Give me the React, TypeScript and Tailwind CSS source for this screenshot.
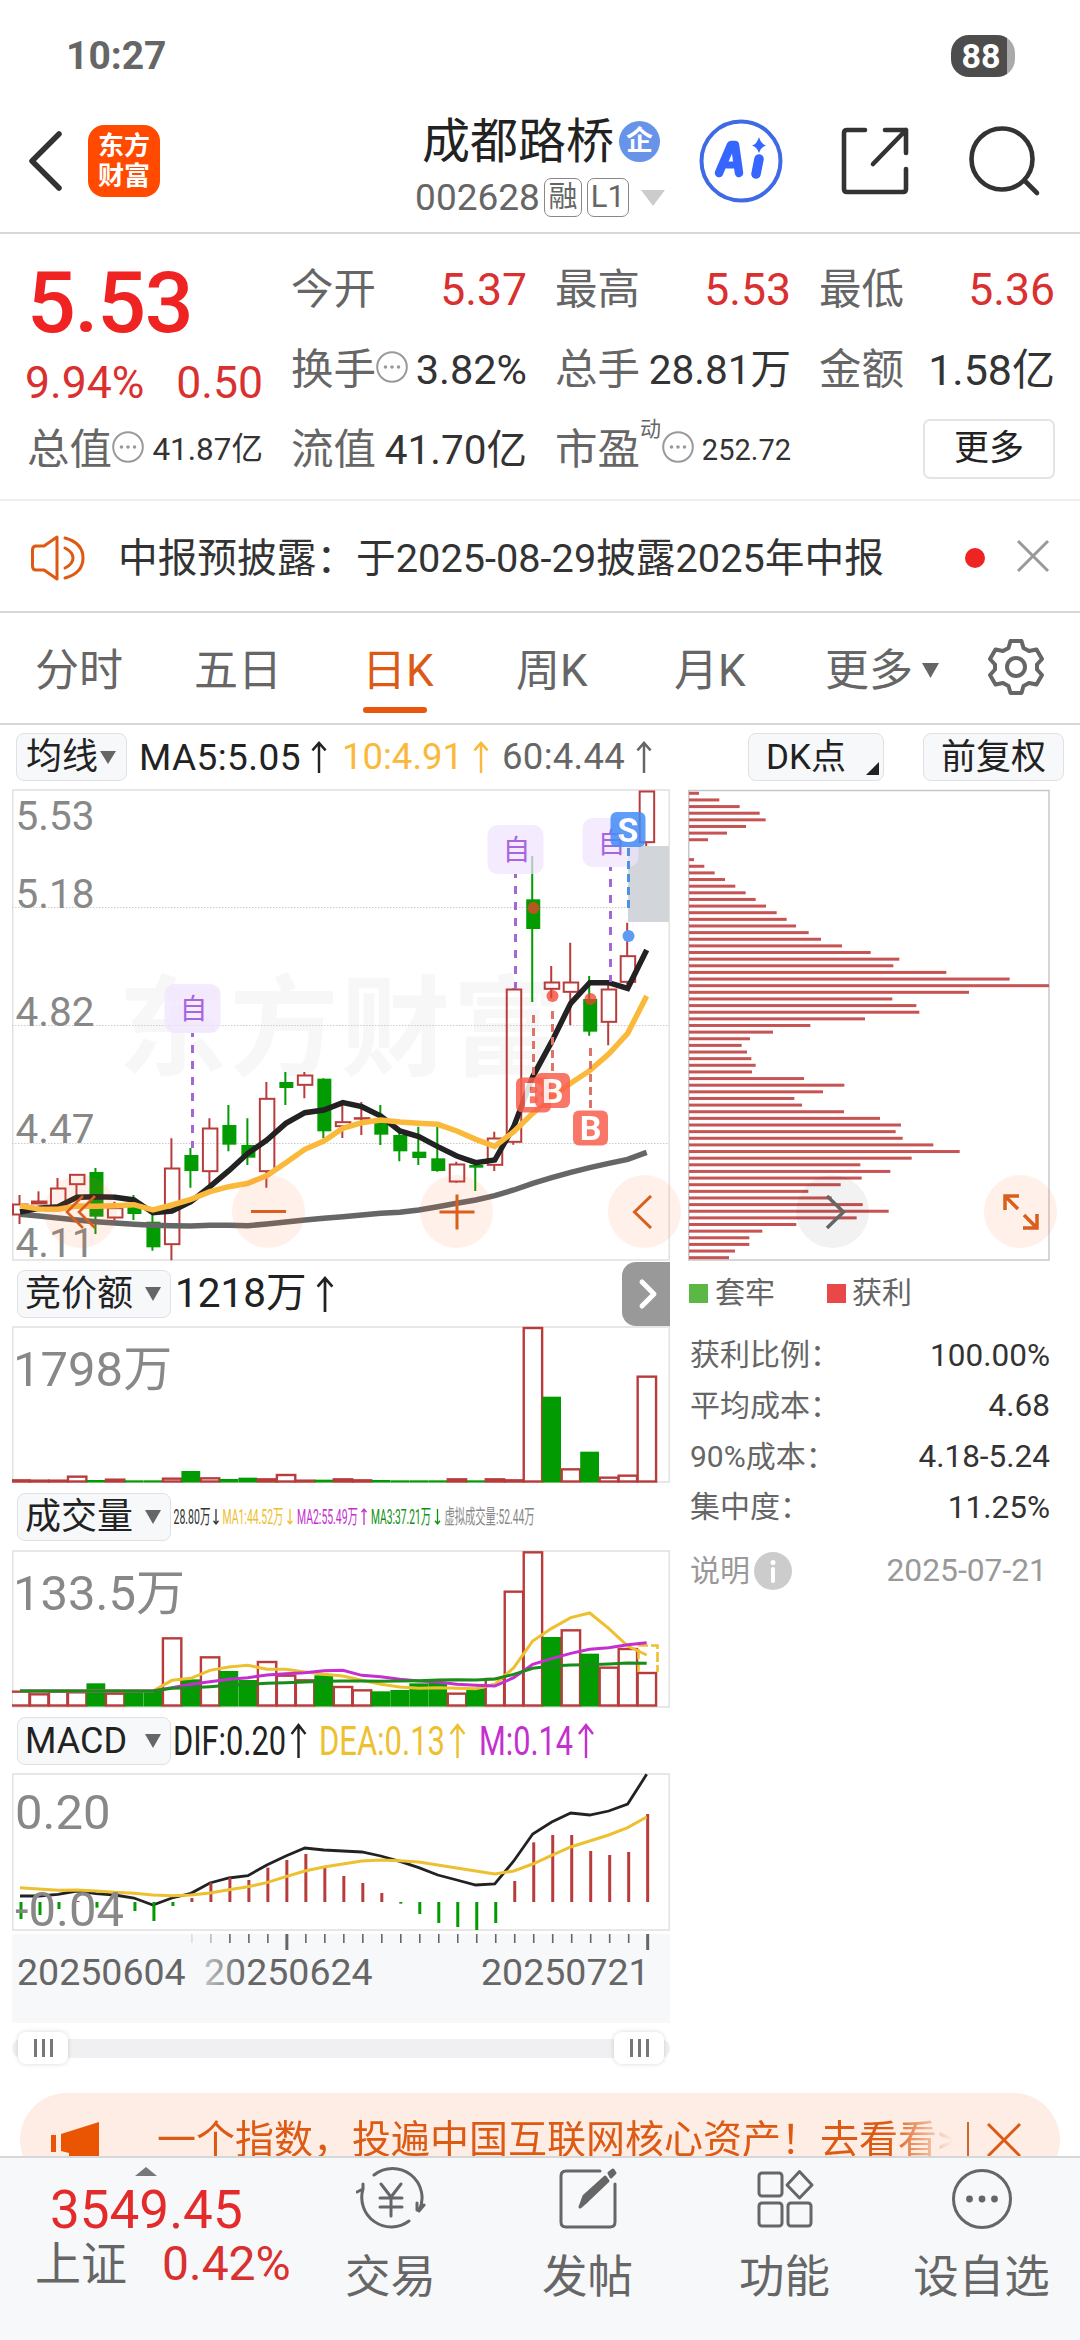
import React from 'react';

// x position of the centre of a trading day in every chart of the left column
const dayX = (i: number) => 20 + i * 18.99;

const RED = '#b93c3c';
const GREEN = '#029c02';

// [up, high, low, body top, body bottom], thirds of a pixel below the origin at 780
const candles: [number, number, number, number, number][] = [
  [1, 1245, 1332, 1272, 1305],
  [1, 1234, 1272, 1263, 1272],
  [1, 1194, 1280, 1224, 1280],
  [1, 1183, 1245, 1183, 1214],
  [0, 1164, 1362, 1176, 1310],
  [1, 1265, 1322, 1283, 1314],
  [0, 1245, 1320, 1275, 1302],
  [0, 1300, 1412, 1325, 1402],
  [1, 1075, 1441, 1164, 1394],
  [0, 1104, 1223, 1125, 1173],
  [1, 1015, 1215, 1044, 1175],
  [0, 975, 1114, 1035, 1094],
  [0, 1015, 1155, 1095, 1133],
  [1, 906, 1223, 955, 1175],
  [0, 876, 975, 906, 924],
  [1, 876, 955, 885, 916],
  [0, 895, 1075, 896, 1054],
  [1, 972, 1074, 1025, 1040],
  [1, 966, 1065, 1013, 1016],
  [0, 975, 1095, 1025, 1064],
  [0, 1055, 1144, 1065, 1114],
  [0, 1040, 1155, 1115, 1134],
  [0, 1027, 1175, 1135, 1173],
  [1, 1145, 1208, 1152, 1206],
  [0, 1150, 1233, 1155, 1163],
  [1, 1055, 1173, 1074, 1156],
  [1, 625, 1094, 627, 1087],
  [0, 228, 666, 358, 447],
  [1, 558, 655, 606, 628],
  [1, 488, 736, 606, 637],
  [0, 588, 767, 657, 755],
  [1, 615, 796, 627, 727],
  [1, 428, 612, 527, 607],
  [1, 33, 198, 33, 188],
];

const ma5 = [1296, 1285, 1280, 1252, 1250, 1252, 1260, 1298, 1293, 1265, 1220, 1172, 1120, 1080, 1030, 998, 990, 968, 980, 1008, 1053, 1070, 1100, 1128, 1148, 1140, 1040, 890, 785, 670, 608, 608, 625, 510];
const ma10 = [1277, 1287, 1288, 1278, 1279, 1277, 1274, 1290, 1275, 1258, 1235, 1220, 1210, 1187, 1148, 1108, 1083, 1045, 1028, 1020, 1026, 1030, 1033, 1053, 1078, 1099, 1055, 1000, 950, 910, 872, 822, 760, 648];
const ma60 = [1303, 1308, 1314, 1320, 1325, 1329, 1333, 1336, 1337, 1338, 1336, 1336, 1337, 1332, 1326, 1320, 1315, 1310, 1305, 1300, 1297, 1290, 1280, 1270, 1260, 1247, 1230, 1210, 1193, 1177, 1163, 1150, 1138, 1117];

const auction: [number, number][] = [
  [1, 661], [1, 662], [1, 662], [1, 650], [0, 660], [1, 659], [0, 661], [0, 661], [1, 656], [0, 633], [1, 655], [0, 657],
  [0, 653], [1, 658], [1, 645], [1, 662], [0, 659], [1, 658], [1, 661], [0, 660], [0, 661], [0, 661], [0, 661], [1, 658],
  [0, 661], [1, 658], [1, 661], [1, 204], [0, 410], [1, 628], [0, 575], [1, 653], [1, 647], [1, 350],
];

const volume: [number, number][] = [
  [1, 602], [1, 610], [1, 602], [1, 604], [0, 577], [1, 608], [0, 600], [0, 600], [1, 442], [0, 565], [1, 499], [0, 540],
  [0, 567], [1, 513], [1, 554], [1, 568], [0, 553], [1, 588], [1, 598], [0, 601], [0, 597], [0, 577], [0, 573], [1, 608],
  [0, 592], [1, 564], [1, 302], [1, 184], [0, 438], [1, 418], [0, 488], [1, 530], [1, 474], [1, 546],
];
const volMa1 = [600, 600, 600, 600, 600, 600, 600, 600, 568, 562, 538, 528, 523, 535, 535, 543, 550, 555, 568, 580, 588, 592, 590, 592, 593, 580, 530, 450, 412, 380, 366, 412, 465, 492];
const volMa2 = [600, 600, 600, 600, 600, 600, 600, 600, 590, 580, 572, 565, 560, 552, 548, 545, 539, 538, 553, 557, 565, 570, 573, 580, 583, 585, 560, 520, 503, 487, 475, 470, 461, 455];
const volMa3 = [600, 600, 600, 600, 600, 600, 600, 600, 592, 590, 587, 583, 580, 577, 575, 573, 571, 570, 570, 571, 570, 569, 567, 566, 567, 564, 550, 532, 525, 522, 521, 519, 516, 517];

const macd = [564, 552, 534, 510, 530, 533, 540, 570, 525, 501, 455, 440, 447, 410, 387, 369, 411, 435, 456, 486, 518, 549, 576, 588, 597, 576, 450, 334, 312, 312, 360, 372, 363, 249];
const dif = [495, 495, 490, 480, 488, 492, 501, 522, 501, 487, 456, 441, 434, 402, 375, 351, 357, 360, 363, 375, 391, 410, 432, 447, 462, 459, 390, 309, 273, 246, 252, 240, 219, 130];
const dea = [470, 474, 478, 477, 480, 484, 487, 492, 494, 492, 486, 476, 467, 455, 437, 420, 408, 399, 390, 387, 389, 393, 402, 411, 420, 429, 420, 399, 373, 348, 330, 312, 290, 258];

const chips = [
  87, 148, 209, 269, 287, 228, 171, 114, 0, 0, 72, 103, 134, 165, 196, 227, 257, 288, 320, 350, 378, 416, 453, 516, 602,
  688, 670, 829, 1019, 1137, 897, 667, 739, 748, 585, 421, 309, 240, 215, 231, 244, 257, 246, 402, 523, 459, 373, 396,
  522, 630, 693, 677, 698, 790, 869, 725, 571, 661, 575, 512, 415, 485, 578, 656, 560, 379, 277, 238, 238, 195, 177,
];

const costs = [
  ['获利比例：', '100.00%'],
  ['平均成本：', '4.68'],
  ['90%成本：', '4.18-5.24'],
  ['集中度：', '11.25%'],
];

type LineProps = { data: number[]; top: number; color: string; width: number };

const Line = ({ data, top, color, width }: LineProps) => (
  <polyline
    points={data.map((v, i) => `${dayX(i)},${top + v / 3}`).join(' ')}
    fill="none"
    stroke={color}
    strokeWidth={width}
  />
);

const Bars = ({ data, top, base }: { data: [number, number][]; top: number; base: number }) => (
  <>
    {data.map(([up, v], i) => {
      const y = top + v / 3;
      return up ? (
        <rect key={i} x={dayX(i) - 9} y={y} width={18.4} height={base - y} fill="#fff" stroke={RED} strokeWidth={2.4} />
      ) : (
        <rect key={i} x={dayX(i) - 9.5} y={y} width={18.8} height={base + 1 - y} fill={GREEN} />
      );
    })}
  </>
);

const Arrow = ({ className = '', down = false }) => (
  <svg viewBox="0 0 18 36" className={`shrink-0 ${className}`} fill="none" stroke="currentColor" strokeWidth={2.6}>
    <path d={down ? 'M9 1V34M2 26L9 34L16 26' : 'M9 35V3M2 11L9 3L16 11'} />
  </svg>
);

const Caret = ({ className = '' }) => (
  <svg viewBox="0 0 16 14" preserveAspectRatio="none" className={`shrink-0 ${className}`} fill="currentColor">
    <path d="M0 0H16L8 14Z" />
  </svg>
);

const Tip = () => (
  <svg viewBox="0 0 32 32" className="w-8 h-8 shrink-0" fill="#999">
    <circle cx="16" cy="16" r="14.8" fill="none" stroke="#999" strokeWidth="2" />
    <circle cx="9.5" cy="16" r="1.8" />
    <circle cx="16" cy="16" r="1.8" />
    <circle cx="22.5" cy="16" r="1.8" />
  </svg>
);

const Stat = ({ label, value, valueClass, tip = false }: { label: string; value: string; valueClass: string; tip?: boolean }) => (
  <div className="flex items-center justify-between h-20">
    <div className="flex items-center text-[42.5px] text-[#666]">
      {label}
      {tip && <div className="-mt-1.5"><Tip /></div>}
    </div>
    <div className={valueClass}>{value}</div>
  </div>
);

const StatusBar = () => (
  <div className="flex items-center justify-between h-[112px] pl-[66px] pr-[65px]">
    <div className="text-[39px] font-bold text-[#666]">10:27</div>
    <div className="flex items-center justify-center w-[64px] h-[42px] rounded-[18px] pr-1 text-[34px] font-bold text-white bg-[linear-gradient(90deg,#4d4d4d_87%,#aaa_87%)]">
      88
    </div>
  </div>
);

const Header = () => (
  <div className="flex items-center h-[122px] pb-[22px] border-b-2 border-[#d8d8d8]">
    <svg viewBox="0 0 36 62" className="w-9 h-[62px] ml-[28px]" fill="none" stroke="#333" strokeWidth="5.5" strokeLinecap="round" strokeLinejoin="round">
      <path d="M31 4L4 31L31 58" />
    </svg>
    <div className="flex flex-col items-center justify-center w-[72px] h-[72px] ml-[24px] rounded-[16px] bg-[#ff4a00] text-white text-[26px] leading-[30px] font-bold">
      <span>东方</span>
      <span>财富</span>
    </div>
    <div className="flex flex-col items-center w-[260px] ml-[252px] mt-[13px]">
      <div className="flex items-center h-[52px] -ml-[2px] text-[48px] text-[#222]">
        成都路桥
        <div className="flex items-center justify-center w-[41px] h-[41px] ml-[5px] rounded-full bg-[#6793e8] text-white text-[27px] font-bold">企</div>
      </div>
      <div className="flex items-center h-[44px] mt-[8px] -ml-[4px] text-[37px] text-[#666]">
        002628
        <div className="flex items-center justify-center w-[38px] h-[39px] ml-[4px] rounded-[7px] border-[1.5px] border-[#888] text-[29px]">融</div>
        <div className="flex items-center justify-center w-[42px] h-[39px] ml-[5px] rounded-[7px] border-[1.5px] border-[#888] text-[31px]">L1</div>
        <Caret className="w-[24px] h-[16px] ml-[12px] text-[#ccc]" />
      </div>
    </div>
    <svg viewBox="0 0 84 84" className="w-[84px] h-[84px] ml-[27px]">
      <circle cx="42" cy="42" r="39.5" fill="#fff" stroke="#3f6ae6" strokeWidth="4" />
      <g fill="none" stroke="#3566ff" strokeLinecap="round" strokeLinejoin="round">
        <path d="M20 54L32 26H36L40 54" strokeWidth="8.5" />
        <path d="M28 46H38" strokeWidth="7" />
        <path d="M60 40L57 55" strokeWidth="9.5" />
      </g>
      <path d="M60 18Q62 25 67 26.5Q62 28 60 34Q58 28 53 26.5Q58 25 60 18Z" fill="#3566ff" />
    </svg>
    <svg viewBox="0 0 70 70" className="w-[70px] h-[70px] ml-[57px]" fill="none" stroke="#333" strokeWidth="4.6" strokeLinecap="round" strokeLinejoin="round">
      <path d="M25 4H7Q4 4 4 7V63Q4 66 7 66H63Q66 66 66 63V43M45 4H66V27M66 4L33 38" />
    </svg>
    <svg viewBox="0 0 74 74" className="w-[74px] h-[74px] ml-[58px]" fill="none" stroke="#333" strokeWidth="4.6" strokeLinecap="round">
      <circle cx="34" cy="35" r="30.5" />
      <path d="M57 57L69 69" />
    </svg>
  </div>
);

const Quote = () => (
  <div className="grid grid-cols-4 gap-x-7 h-[267px] pt-[16px] pl-[27px] pr-[25px] leading-none border-b-2 border-[#eee]">
    <div>
      <div className="flex items-center h-[106px] text-[86px] tracking-[-1.3px] font-medium text-[#f02323]">5.53</div>
      <div className="flex items-center justify-between h-[54px] -ml-[2px] text-[44.5px] text-[#d93030]">
        <span>9.94%</span>
        <span>0.50</span>
      </div>
      <Stat label="总值" value="41.87亿" valueClass="text-[31.5px] text-[#333]" tip />
    </div>
    <div>
      <Stat label="今开" value="5.37" valueClass="text-[44.5px] text-[#d93030]" />
      <Stat label="换手" value="3.82%" valueClass="text-[41.5px] text-[#333]" tip />
      <Stat label="流值" value="41.70亿" valueClass="text-[40.5px] text-[#333]" />
    </div>
    <div>
      <Stat label="最高" value="5.53" valueClass="text-[44.5px] text-[#d93030]" />
      <Stat label="总手" value="28.81万" valueClass="text-[40.5px] text-[#333]" />
      <div className="flex items-center h-20">
        <div className="text-[42.5px] text-[#666]">市盈</div>
        <div className="-mt-[42px] text-[21px] text-[#666]">动</div>
        <div className="-mt-1.5 ml-[1px]"><Tip /></div>
        <div className="ml-auto text-[29px] text-[#333]">252.72</div>
      </div>
    </div>
    <div>
      <Stat label="最低" value="5.36" valueClass="text-[44.5px] text-[#d93030]" />
      <Stat label="金额" value="1.58亿" valueClass="text-[43px] text-[#333]" />
      <div className="flex items-center justify-end h-20">
        <div className="flex items-center justify-center w-[132px] h-[60px] -mt-[3px] rounded-[7px] border-2 border-[#e4e4e8] text-[35px] text-[#222]">更多</div>
      </div>
    </div>
  </div>
);

const Notice = () => (
  <div className="flex items-center h-[112px] pl-[30px] pr-[30px] border-b-2 border-[#d8d8d8]">
    <svg viewBox="0 0 56 48" className="w-14 h-12 mt-1" fill="none" stroke="#dd5a14" strokeWidth="3" strokeLinejoin="round" strokeLinecap="round">
      <path d="M27 3V45L14 36H6Q2.500 36 2.500 32V16Q2.500 12 6 12H14Z" />
      <path d="M35 14Q43 18 43 24Q43 30 35 34M35 4Q53 9 53 24Q53 39 35 44" />
    </svg>
    <div className="mt-[5px] ml-[32px] text-[39.7px] text-[#333] whitespace-nowrap">中报预披露：于2025-08-29披露2025年中报</div>
    <div className="w-5 h-5 mt-1 ml-auto rounded-full bg-[#f02323]" />
    <svg viewBox="0 0 34 34" className="w-[34px] h-[34px] ml-[31px]" stroke="#999" strokeWidth="3">
      <path d="M2 2L32 32M32 2L2 32" />
    </svg>
  </div>
);

const Tabs = () => (
  <div className="flex items-center h-[112px] pl-[35px] pr-[35px] pt-[5px] text-[44px] text-[#666] border-b-2 border-[#d8d8d8]">
    <div className="w-[159px]">分时</div>
    <div className="w-[168px]">五日</div>
    <div className="relative w-[154px] text-[#dd5a14]">
      日K
      <div className="absolute left-[1px] -bottom-[9px] w-[64px] h-[6px] rounded-full bg-[#e8570c]" />
    </div>
    <div className="w-[158px]">周K</div>
    <div className="w-[151px]">月K</div>
    <div className="flex items-center">
      更多
      <Caret className="w-[17px] h-[15px] ml-[9px]" />
    </div>
    <svg viewBox="0 0 58 58" className="w-[58px] h-[58px] ml-auto -mt-[7px]" fill="none" stroke="#666" strokeWidth="4" strokeLinejoin="round">
      <path d="M23.500 3H34.500L36.500 10L42 13L49.500 11.500L55 21L50 26.500V31.500L55 37L49.500 46.500L42 45L36.500 48L34.500 55H23.500L21.500 48L16 45L8.500 46.500L3 37L8 31.500V26.500L3 21L8.500 11.500L16 13L21.500 10Z" />
      <circle cx="29" cy="29" r="9" />
    </svg>
  </div>
);

const pill = 'flex items-center h-[48px] rounded-[8px] border-[1.5px] border-[#dfe1e6] bg-[#f7f8fa] text-[#222]';

const MaRow = () => (
  <div className="flex items-center h-[64px] pl-[16px] pr-[16px] leading-none text-[36.5px]">
    <div className={`${pill} w-[111px] pl-[9px] text-[36px]`}>
      均线
      <Caret className="w-[16px] h-[13px] ml-[2px] text-[#666]" />
    </div>
    <div className="w-[161px] ml-[12px] text-[37px] tracking-[0.4px] text-[#222] whitespace-nowrap">MA5:5.05</div>
    <Arrow className="w-[18px] h-[34px] ml-[10px] text-[#222]" />
    <div className="w-[120px] ml-[14px] text-[#fbb93c]">10:4.91</div>
    <Arrow className="w-[18px] h-[34px] ml-[10px] text-[#fbb93c]" />
    <div className="w-[125px] ml-[12px] tracking-[0.3px] text-[#666]">60:4.44</div>
    <Arrow className="w-[18px] h-[34px] ml-[8px] text-[#666]" />
    <div className={`${pill} relative w-[136px] ml-auto pl-[17px] text-[35px]`}>
      DK点
      <svg viewBox="0 0 13 13" className="absolute right-[4px] bottom-[5px] w-[13px] h-[13px]"><path d="M13 0V13H0Z" fill="#222" /></svg>
    </div>
    <div className={`${pill} w-[141px] ml-[39px] justify-center text-[35px]`}>前复权</div>
  </div>
);

const Own = ({ x, y, end }: { x: number; y: number; end: number }) => (
  <g>
    <rect x={x - 28} y={y} width="56" height="49" rx="10" fill="#f0e2ff" fillOpacity="0.7" />
    <path d={`M${x} ${y + 49}V${end}`} stroke="#a269d6" strokeWidth="3" strokeDasharray="8 8" strokeDashoffset="4" />
    <text x={x + 1} y={y + 35} textAnchor="middle" fontSize="28" fill="#a765e0">自</text>
  </g>
);

const Mark = ({ x, y, label, color }: { x: number; y: number; label: string; color: string }) => (
  <g opacity="0.85">
    <rect x={x - 17.5} y={y} width="35" height="35" rx="6" fill={color} />
    <text x={x} y={y + 29.5} textAnchor="middle" fontSize="34" fontWeight="700" fill="#fff">{label}</text>
  </g>
);

const PriceChart = () => (
  <svg viewBox="12 789 658 472" className="block w-[658px] h-[472px]">
    <text x="118" y="1067" fontSize="109" fontWeight="700" letterSpacing="2.500" fill="#f7f7f7">东方财富</text>
    <rect x="12.750" y="790" width="656.500" height="470" fill="none" stroke="#e2e2e2" strokeWidth="1.600" />
    <path d="M12 907.500H669M12 1025.500H669M12 1143.500H669" stroke="#ccc" strokeWidth="1.200" strokeDasharray="1.500 1.500" />
    <rect x="628" y="846" width="41" height="76" fill="#d2d6db" />
    <g fontSize="40.500" fill="#888">
      <text x="15.500" y="830">5.53</text>
      <text x="15.500" y="908">5.18</text>
      <text x="15.500" y="1026">4.82</text>
      <text x="15.500" y="1143">4.47</text>
    </g>
    {candles.map(([up, high, low, top, bottom], i) => {
      const x = dayX(i) - 0.5;
      const t = 780 + top / 3;
      const b = 780 + bottom / 3;
      return (
        <g key={i}>
          <path d={`M${x} ${780 + high / 3}V${up ? t : b}M${x} ${up ? b : t}V${780 + low / 3}`} stroke={up ? RED : GREEN} strokeWidth="2" />
          {up ? (
            <rect x={x - 6.5} y={t + 0.5} width="14.500" height={Math.max(b - t - 1, 0.5)} fill="none" stroke={RED} strokeWidth="2" />
          ) : (
            <rect x={x - 6} y={t} width="14" height={b - t} fill={GREEN} />
          )}
        </g>
      );
    })}
    <Line data={ma60} top={780} color="#666" width={5.5} />
    <Line data={ma5} top={780} color="#222" width={5.5} />
    <Line data={ma10} top={780} color="#fbb93c" width={5.5} />
    <text x="15.500" y="1257" fontSize="40.500" fill="#888">4.11</text>
    <Own x={192.5} y={984} end={1148} />
    <Own x={515.5} y={825} end={989} />
    <Own x={610.5} y={818} end={982} />
    <g strokeWidth="3" strokeDasharray="8 5" fill="none">
      <path d="M533.500 1015V1078M552.500 1011V1074M590.500 1048V1110" stroke="#dd7468" />
      <path d="M628.500 848V909" stroke="#5092dd" />
    </g>
    <g fill="#f0402c" fillOpacity="0.75">
      <circle cx="533.500" cy="908" r="6" />
      <circle cx="552.500" cy="996" r="6" />
      <circle cx="590.500" cy="999" r="6" />
    </g>
    <circle cx="628.500" cy="936" r="6" fill="#5c9cf5" />
    <Mark x={533.5} y={1077.5} label="B" color="#f9604e" />
    <Mark x={552.5} y={1073} label="B" color="#f9604e" />
    <Mark x={590.5} y={1110.5} label="B" color="#f9604e" />
    <Mark x={628} y={812} label="S" color="#438cf7" />
  </svg>
);

const ChipChart = () => (
  <svg viewBox="687 789 364 472" className="block w-[364px] h-[472px]">
    <rect x="688.750" y="790.500" width="360.250" height="469.500" fill="none" stroke="#c8c8c8" strokeWidth="1.500" />
    {chips.map((v, i) => v > 0 && <rect key={i} x="689" y={791.8 + i * 6.634} width={(v - 57) / 3} height="3" fill="#c75454" />)}
  </svg>
);

const round = 'absolute top-[386px] flex items-center justify-center w-[73px] h-[73px] rounded-full';

const ChartButtons = () => (
  <div className="text-[#d95f1c]">
    <div className={`${round} left-[44px] bg-[#ff6e28]/10`}>
      <svg viewBox="0 0 34 34" className="w-[34px] h-[34px]" fill="none" stroke="currentColor" strokeWidth="2.600"><path d="M19 1L3 17L19 33M31 1L15 17L31 33" /></svg>
    </div>
    <div className={`${round} left-[232px] bg-[#ff6e28]/10`}>
      <div className="w-[35px] h-[3px] bg-[#d95f1c]" />
    </div>
    <div className={`${round} left-[420px] bg-[#ff6e28]/10`}>
      <svg viewBox="0 0 36 36" className="w-9 h-9" stroke="currentColor" strokeWidth="3"><path d="M18 0.500V35.500M0.500 18H35.500" /></svg>
    </div>
    <div className={`${round} left-[608px] bg-[#ff6e28]/10`}>
      <svg viewBox="0 0 34 34" className="w-[34px] h-[34px] -ml-1" fill="none" stroke="currentColor" strokeWidth="3"><path d="M25 1L8.500 17L25 33" /></svg>
    </div>
    <div className={`${round} left-[796px] bg-black/5 text-[#666]`}>
      <svg viewBox="0 0 34 34" className="w-[34px] h-[34px]" fill="none" stroke="currentColor" strokeWidth="3.500"><path d="M11 1L27.500 17L11 33" /></svg>
    </div>
    <div className={`${round} left-[984px] bg-[#ff6e28]/10`}>
      <svg viewBox="0 0 36 36" className="w-9 h-9" fill="none" stroke="currentColor" strokeWidth="3.500"><path d="M2 16V2H16M2 2L15 15M34 20V34H20M34 34L21 21" /></svg>
    </div>
  </div>
);

const Indicator = ({ name }: { name: string }) => (
  <div className={`${pill} w-[154px] pl-[7px] pr-[9px] justify-between text-[36px]`}>
    {name}
    <Caret className="w-[16px] h-[14px] text-[#666]" />
  </div>
);

// indicator values squeezed to the width that is left beside the selector
const Fit = ({ x, w, y, size, color, children }: { x: number; w: number; y: number; size: number; color: string; children: string }) => (
  <text x={x} y={y} fontSize={size} fill={color} textLength={w} lengthAdjust="spacingAndGlyphs">{children}</text>
);

const up = (x: number, top: number, bottom: number, color: string, r: number, w: number) => (
  <path d={`M${x} ${bottom}V${top}M${x - r} ${top + r * 1.3}L${x} ${top}L${x + r} ${top + r * 1.3}`} stroke={color} strokeWidth={w} fill="none" />
);
const down = (x: number, top: number, bottom: number, color: string, r: number, w: number) => (
  <path d={`M${x} ${top}V${bottom}M${x - r} ${bottom - r * 1.3}L${x} ${bottom}L${x + r} ${bottom - r * 1.3}`} stroke={color} strokeWidth={w} fill="none" />
);

const SubCharts = () => (
  <div className="w-[658px]">
    <div className="flex items-center h-[65px] pl-[5px] leading-none">
      <Indicator name="竞价额" />
      <div className="ml-[4px] text-[40.5px] text-[#222]">1218万</div>
      <Arrow className="w-[20px] h-[38px] ml-[8px] text-[#222]" />
      <div className="flex items-center justify-center w-[48px] h-[64px] ml-auto rounded-l-[14px] bg-[#999]">
        <svg viewBox="0 0 20 32" className="w-5 h-8 ml-1" fill="none" stroke="#fff" strokeWidth="5" strokeLinecap="round" strokeLinejoin="round"><path d="M4 4L16 16L4 28" /></svg>
      </div>
    </div>
    <svg viewBox="12 1326 658 157" className="block w-[658px] h-[157px]">
      <rect x="12.750" y="1327" width="656.500" height="155" fill="none" stroke="#e2e2e2" strokeWidth="1.600" />
      <Bars data={auction} top={1260} base={1481.5} />
      <text x="13" y="1386" fontSize="49" fill="#888">1798万</text>
    </svg>

    <div className="flex items-center h-[67px] pl-[5px] leading-none">
      <Indicator name="成交量" />
      <svg viewBox="171 1483 400 67" className="w-[400px] h-[67px]">
        <Fit x={173.500} w={37} y={1524} size={20} color="#333">28.80万</Fit>
        {down(216, 1509, 1524, '#333', 2.5, 1.3)}
        <Fit x={222.500} w={61} y={1524} size={20} color="#ecc02f">MA1:44.52万</Fit>
        {down(290, 1509, 1524, '#ecc02f', 2.5, 1.3)}
        <Fit x={297} w={61} y={1524} size={20} color="#c42fcf">MA2:55.49万</Fit>
        {up(364, 1509, 1525, '#c42fcf', 2.5, 1.3)}
        <Fit x={371} w={60} y={1524} size={20} color="#109010">MA3:37.21万</Fit>
        {down(437.500, 1509, 1524, '#109010', 2.5, 1.3)}
        <Fit x={444.500} w={90} y={1524} size={20} color="#888">虚拟成交量:52.44万</Fit>
      </svg>
    </div>
    <svg viewBox="12 1549 658 158" className="block w-[658px] h-[158px]">
      <rect x="12.750" y="1550" width="656.500" height="156" fill="none" stroke="#e2e2e2" strokeWidth="1.600" />
      <Bars data={volume} top={1490} base={1704.5} />
      <path d="M638.500 1671V1644.500H657.500V1671" fill="none" stroke="#ecc02f" strokeWidth="2.600" strokeDasharray="10 3" />
      <Line data={volMa1} top={1490} color="#ecc02f" width={3} />
      <Line data={volMa2} top={1490} color="#c42fcf" width={3} />
      <Line data={volMa3} top={1490} color="#1a8c1a" width={3} />
      <text x="13" y="1609" fontSize="49" fill="#888">133.5万</text>
    </svg>

    <div className="flex items-center h-[65px] pl-[5px] leading-none">
      <Indicator name="MACD" />
      <svg viewBox="171 1707 480 65" className="w-[480px] h-[65px]">
        <Fit x={173} w={113} y={1754} size={40} color="#222">DIF:0.20</Fit>
        {up(298.5, 1724, 1757, '#222', 7, 2.4)}
        <Fit x={319} w={126} y={1754} size={40} color="#ecc02f">DEA:0.13</Fit>
        {up(457.5, 1724, 1757, '#ecc02f', 7, 2.4)}
        <Fit x={479} w={94} y={1754} size={40} color="#c42fcf">M:0.14</Fit>
        {up(586, 1724, 1757, '#c42fcf', 7, 2.4)}
      </svg>
    </div>
    <svg viewBox="12 1772 658 161" className="block w-[658px] h-[161px]">
      <rect x="12.750" y="1773" width="656.500" height="156" fill="none" stroke="#e2e2e2" strokeWidth="1.600" />
      <Line data={dif} top={1730} color="#222" width={2.8} />
      {macd.map((v, i) => (
        <path key={i} d={`M${dayX(i) + 1} 1901V${1730 + v / 3}`} stroke={v < 513 ? RED : GREEN} strokeWidth="3" />
      ))}
      <Line data={dea} top={1730} color="#ecc02f" width={3} />
      <text x="15" y="1828" fontSize="49" fill="#888">0.20</text>
      <text x="15" y="1925" fontSize="49" fill="#888">-0.04</text>
    </svg>
    <svg viewBox="12 1933 658 89" className="block w-[658px] h-[89px] bg-[#f7f8fa]">
      <defs>
        <linearGradient id="fade" x1="200" x2="245" y1="0" y2="0" gradientUnits="userSpaceOnUse">
          <stop offset="0" stopColor="#ccc" />
          <stop offset="1" stopColor="#666" />
        </linearGradient>
      </defs>
      {Array.from({ length: 25 }, (_, k) => k + 9).map((i) => {
        const major = i === 14 || i === 33;
        return <path key={i} d={`M${dayX(i) + 1} 1933V${major ? 1949 : 1942}`} stroke={i === 9 ? '#ddd' : i === 10 ? '#bbb' : '#666'} strokeWidth={major ? 3 : 1.6} />;
      })}
      <g fontSize="37.500" fill="#666">
        <text x="17" y="1984">20250604</text>
        <text x="204" y="1984" fill="url(#fade)">20250624</text>
        <text x="481" y="1984">20250721</text>
      </g>
    </svg>
    <div className="flex items-center h-[50px]">
      <div className="flex items-center justify-between w-[658px] h-[19px] px-[6px] rounded-full bg-[#f0f0f2]">
        {[0, 1].map((n) => (
          <div key={n} className="flex items-center justify-center gap-[5px] w-[50px] h-[32px] rounded-[8px] bg-white shadow-[0_0_5px_rgba(0,0,0,0.15)]">
            <div className="w-[3px] h-[18px] bg-[#777]" />
            <div className="w-[3px] h-[18px] bg-[#777]" />
            <div className="w-[3px] h-[18px] bg-[#777]" />
          </div>
        ))}
      </div>
    </div>
  </div>
);

const CostPanel = () => (
  <div className="w-[361px] ml-[19px] leading-none text-[30px] text-[#666]">
    <div className="flex items-center h-[64px]">
      <div className="w-[19px] h-[19px] bg-[#5bb845]" />
      <div className="ml-[7px]">套牢</div>
      <div className="w-[19px] h-[19px] ml-[52px] bg-[#e84848]" />
      <div className="ml-[6px]">获利</div>
    </div>
    <div className="pt-[5px]">
      {costs.map(([label, value]) => (
        <div key={label} className="flex items-center justify-between h-[50.700px] pl-[1px]">
          <span>{label}</span>
          <span className="text-[31.500px] text-[#333]">{value}</span>
        </div>
      ))}
    </div>
    <div className="flex items-center h-[76px] pl-[1px] text-[#999]">
      说明
      <svg viewBox="0 0 38 38" className="w-[38px] h-[38px] ml-[4px]">
        <circle cx="19" cy="19" r="19" fill="#ccc" />
        <circle cx="19" cy="10.500" r="2.500" fill="#fff" />
        <path d="M19 17V29" stroke="#fff" strokeWidth="4" strokeLinecap="round" />
      </svg>
      <div className="ml-auto mr-[3px] text-[31.800px]">2025-07-21</div>
    </div>
  </div>
);

const Promo = () => (
  <div className="flex items-center h-[94px] mx-[20px] mt-[20px] pl-[31px] rounded-[47px] bg-[#fdede4] text-[#dd5a14]">
    <svg viewBox="0 0 50 46" className="w-[50px] h-[46px] mt-[8px]" fill="#ea5504">
      <path d="M0 14H5V31H0ZM10 13L48 1V46H40L38 44L30 41Q28 38 26 38H18V32L10 30Z" />
    </svg>
    <div className="w-[796px] ml-[56px] text-[39px] whitespace-nowrap overflow-hidden [mask-image:linear-gradient(90deg,#000_92%,transparent)]">
      一个指数，投遍中国互联网核心资产！去看看&gt;
    </div>
    <div className="w-[2px] h-[37px] ml-[14px] bg-[#c9692f]" />
    <svg viewBox="0 0 34 34" className="w-[34px] h-[34px] ml-[18px]" stroke="currentColor" strokeWidth="3"><path d="M1 1L33 33M33 1L1 33" /></svg>
  </div>
);

const NavItem = ({ label, children }: { label: string; children: React.ReactNode }) => (
  <div className="flex flex-col items-center w-[197px] pt-[6px]">
    <svg viewBox="0 0 70 70" className="w-[70px] h-[70px]" fill="none" stroke="#666" strokeWidth="3" strokeLinejoin="round" strokeLinecap="round">
      {children}
    </svg>
    <div className="mt-[21px] text-[45.500px] leading-none text-[#666]">{label}</div>
  </div>
);

const BottomNav = () => (
  <div className="flex h-[184px] bg-[#f7f8fa] border-t-2 border-[#d6d7da]">
    <div className="flex flex-col w-[292px] pt-[9px] leading-none">
      <svg viewBox="0 0 22 9" className="w-[22px] h-[9px] ml-[135px]"><path d="M11 0L22 9H0Z" fill="#777" /></svg>
      <div className="mt-[8px] pl-[50px] text-[53px] leading-[52px] text-[#e32b2b]">3549.45</div>
      <div className="flex items-center h-[56px] pl-[35px] whitespace-nowrap">
        <span className="text-[46px] text-[#666]">上证</span>
        <span className="ml-[35px] text-[48px] text-[#d93030]">0.42%</span>
      </div>
    </div>
    <NavItem label="交易">
      <path d="M18 11A29.500 29.500 0 0 1 63 47L68 41M61 46V39M53 57A29.500 29.500 0 0 1 7 25L1 28M7 25V20" />
      <path d="M25 20L35 33L45 20M35 33V52M24 34H46M24 43H46" />
    </NavItem>
    <NavItem label="发帖">
      <path d="M47 7H13Q8 7 8 12V58Q8 63 13 63H57Q62 63 62 58V20" />
      <path d="M27 43L31 32L52 13L55 17L34 37ZM56 9L60 6L62 9L58 13Z" fill="#666" />
    </NavItem>
    <NavItem label="功能">
      <rect x="9" y="9" width="23" height="23" rx="3" />
      <rect x="9" y="39" width="23" height="23" rx="3" />
      <rect x="38" y="39" width="23" height="23" rx="3" />
      <path d="M49.500 7.500L62 21L49.500 34L37 21Z" />
    </NavItem>
    <NavItem label="设自选">
      <circle cx="35" cy="35" r="28.500" />
      <g fill="#666" stroke="none">
        <circle cx="22.500" cy="35" r="3.400" />
        <circle cx="35" cy="35" r="3.400" />
        <circle cx="47.500" cy="35" r="3.400" />
      </g>
    </NavItem>
  </div>
);

const App = () => {
  return (
    <div className="flex flex-col w-[1080px] h-[2340px] overflow-hidden bg-white font-[Roboto,'Noto_Sans_CJK_SC',sans-serif]">
      <div className="flex-1 min-h-0 overflow-hidden">
        <StatusBar />
        <Header />
        <Quote />
        <Notice />
        <Tabs />
        <MaRow />
        <div className="relative flex pl-[12px]">
          <PriceChart />
          <div className="ml-[17px]"><ChipChart /></div>
          <ChartButtons />
        </div>
        <div className="flex pl-[12px]">
          <SubCharts />
          <CostPanel />
        </div>
        <Promo />
      </div>
      <BottomNav />
    </div>
  );
};

export default App;
